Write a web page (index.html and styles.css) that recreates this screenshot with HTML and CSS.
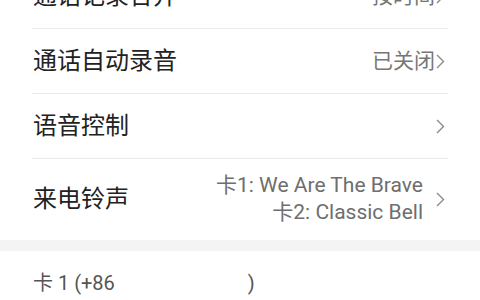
FILE: index.html
```html
<!DOCTYPE html>
<html lang="zh-CN">
<head>
<meta charset="utf-8">
<link rel="stylesheet" href="styles.css">
</head>
<body>
<div class="screen">
  <ul class="list">
    <li class="row row-top">
      <span class="label">通话记录合并</span>
      <span class="value">按时间<svg class="chev" viewBox="0 0 9 15"><path d="M1 1 L7.5 7.5 L1 14"/></svg></span>
    </li>
    <li class="row">
      <span class="label">通话自动录音</span>
      <span class="value">已关闭<svg class="chev" viewBox="0 0 9 15"><path d="M1 1 L7.5 7.5 L1 14"/></svg></span>
    </li>
    <li class="row">
      <span class="label">语音控制</span>
      <span class="value"><svg class="chev" viewBox="0 0 9 15"><path d="M1 1 L7.5 7.5 L1 14"/></svg></span>
    </li>
    <li class="row row-tall">
      <span class="label">来电铃声</span>
      <span class="value value-multi">
        <span class="lines">
          <span>卡1: We Are The Brave</span>
          <span>卡2: Classic Bell</span>
        </span>
        <svg class="chev" viewBox="0 0 9 15"><path d="M1 1 L7.5 7.5 L1 14"/></svg>
      </span>
    </li>
  </ul>
  <div class="gap"></div>
  <div class="section-head">卡 1 (+86<span class="redact"></span>)</div>
</div>
</body>
</html>
```
FILE: styles.css
```css
html, body {
  margin: 0;
  padding: 0;
  background: #ffffff;
}
body {
  width: 480px;
  height: 300px;
  overflow: hidden;
  font-family: Roboto, "Noto Sans CJK SC", sans-serif;
}
.screen {
  display: flex;
  flex-direction: column;
}
.list {
  list-style: none;
  margin: -36px 0 0 0;
  padding: 0 32px;
}
.row {
  display: flex;
  align-items: center;
  justify-content: space-between;
  height: 64px;
  border-bottom: 1px solid #ebebeb;
}
.row-tall {
  height: 81px;
  border-bottom: none;
}
.label {
  font-size: 24px;
  line-height: 30px;
  color: #222222;
  padding-left: 1px;
  padding-bottom: 1px;
}
.value {
  display: flex;
  align-items: center;
  font-size: 21px;
  line-height: 28px;
  color: #767676;
  padding-right: 3px;
}
.chev {
  width: 9px;
  height: 15px;
  margin-left: 1px;
}
.chev path {
  fill: none;
  stroke: #8a8a8a;
  stroke-width: 1.4;
}
.value-multi {
  gap: 12px;
}
.lines {
  display: flex;
  flex-direction: column;
  align-items: flex-end;
  font-size: 21px;
  line-height: 27px;
  color: #6e6e6e;
  padding-bottom: 2px;
}
.gap {
  height: 11px;
  background: #f4f4f4;
}
.section-head {
  padding: 16px 0 0 33px;
  font-size: 20px;
  color: #555555;
}
.redact {
  display: inline-block;
  width: 133px;
}
```
